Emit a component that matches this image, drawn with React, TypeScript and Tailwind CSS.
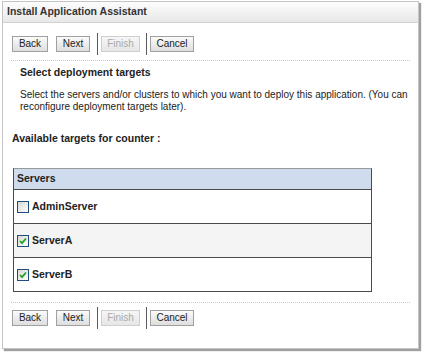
import React from 'react';

const font = { fontFamily: '"Liberation Sans", Arial, sans-serif' };

function Btn({ label, w, disabled }: { label: string; w: string; disabled?: boolean }) {
  return (
    <button
      className={
        w +
        ' h-[16px] border text-[10px] leading-[14px] text-center ' +
        (disabled
          ? 'border-[#cfcfcf] bg-linear-to-b from-[#f6f6f6] to-[#e6e6e6] text-[#a9a9a9]'
          : 'border-[#a0a0a0] bg-linear-to-b from-[#fbfbfb] to-[#dedede] text-[#222]')
      }
    >
      {label}
    </button>
  );
}

function Sep() {
  return <div className="w-px h-[22px] bg-[#5a5a5a]" />;
}

function ButtonBar() {
  return (
    <div className="flex items-center pl-[9px] h-[22px]">
      <Btn label="Back" w="w-[36px]" />
      <div className="w-[8px]" />
      <Btn label="Next" w="w-[34px]" />
      <div className="w-[7px]" />
      <Sep />
      <div className="w-[3px]" />
      <Btn label="Finish" w="w-[39px]" disabled />
      <div className="w-[6px]" />
      <Sep />
      <div className="w-[3px]" />
      <Btn label="Cancel" w="w-[44px]" />
    </div>
  );
}

function Check({ on }: { on: boolean }) {
  return (
    <div className="w-[12px] h-[12px] border border-[#1c4f80] bg-linear-to-br from-[#d8d8d2] to-white flex items-center justify-center">
      {on && (
        <svg width="8" height="8" viewBox="0 0 8 8">
          <path d="M1 4 L3 6.2 L7 1.5" stroke="#22a322" strokeWidth="1.8" fill="none" />
        </svg>
      )}
    </div>
  );
}

function Row({ name, on, shade }: { name: string; on: boolean; shade?: boolean }) {
  return (
    <div
      className={
        'h-[34px] flex items-center gap-[3px] pl-[3px] border-t border-[#4a4a4a] ' +
        (shade ? 'bg-[#f4f4f4]' : 'bg-white')
      }
    >
      <Check on={on} />
      <span className="font-bold text-[10.5px] text-[#222]">{name}</span>
    </div>
  );
}

export default function App() {
  return (
    <div className="w-[422px] h-[354px] bg-white relative" style={font}>
      <div className="absolute left-[2px] top-[1px] w-[417px] h-[348px] border border-[#c4c4c4] bg-white shadow-[2px_2px_1px_#a0a0a0] flex flex-col">
        <div className="h-[21px] bg-linear-to-b from-[#fdfdfd] to-[#e8e8e8] border-b border-[#d2d2d2] flex items-center pl-[4px]">
          <span className="font-bold text-[10.5px] text-[#333]">Install Application Assistant</span>
        </div>
        <div className="mt-[10px]">
          <ButtonBar />
        </div>
        <div className="mx-[8px] mt-[5px] border-t border-dotted border-[#c8c8c8]" />
        <div className="pl-[17px] pt-[4px] text-[10px] text-[#222]">
          <div className="font-bold text-[10.5px] leading-[14px]">Select deployment targets</div>
          <div className="mt-[10px] leading-[12px] pr-[6px]">
            Select the servers and/or clusters to which you want to deploy this application. (You can reconfigure deployment targets later).
          </div>
        </div>
        <div className="pl-[9px] mt-[18px] font-bold text-[10.5px] text-[#222] leading-[14px]">
          Available targets for counter :
        </div>
        <div className="ml-[10px] mt-[23px] w-[359px] border border-[#4a4a4a] border-t-[#9a9a9a]">
          <div className="h-[20px] bg-[#cfdcee] flex items-center pl-[3px] font-bold text-[10.5px] text-[#222]">Servers</div>
          <Row name="AdminServer" on={false} />
          <Row name="ServerA" on={true} shade />
          <Row name="ServerB" on={true} />
        </div>
        <div className="mx-[8px] mt-[10px] border-t border-dotted border-[#c8c8c8]" />
        <div className="mt-[4px]">
          <ButtonBar />
        </div>
      </div>
    </div>
  );
}
